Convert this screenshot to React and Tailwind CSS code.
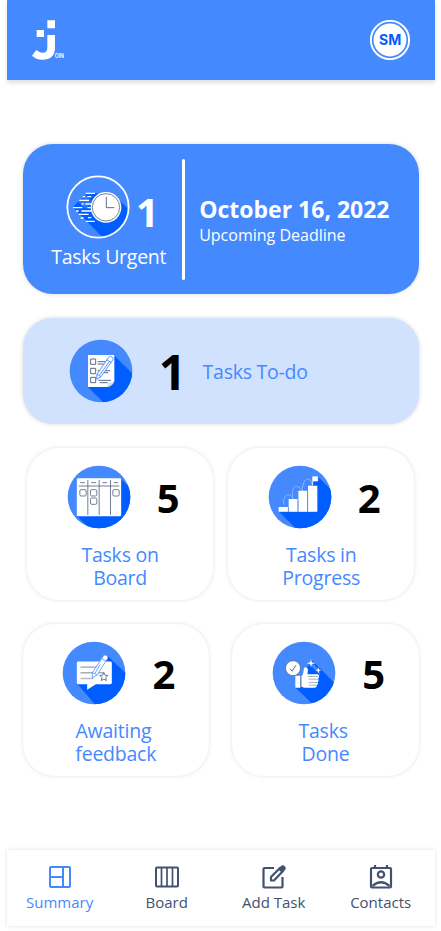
const FONT = "font-['Open_Sans','Noto_Sans',sans-serif]";

function Disc({ id, cx, cy, ring, children }) {
  return (
    <svg className="size-16 shrink-0" viewBox={`${cx - 96} ${cy - 96} 192 192`}>
      <defs>
        <clipPath id={id}>
          <circle cx={cx} cy={cy} r="94" />
        </clipPath>
      </defs>
      <circle cx={cx} cy={cy} r="94" fill="#4589ff" />
      <g clipPath={`url(#${id})`}>{children}</g>
      {ring && <circle cx={cx} cy={cy} r="92" fill="none" stroke="#fff" strokeWidth="5.5" />}
    </svg>
  );
}

function UrgentIcon() {
  return (
    <Disc id="urgent" cx={234} cy={203} ring>
      <path d="M288 172L340 224V310H264L158 204L200 162H230Z" fill="#005dff" />
      <path d="M170 183L192 160L214 186L196 210Z" fill="#4589ff" opacity="0.6" />
      <path
        d="M197 162H225M188 172H196M202 172H214M178 183H207M185 194H191M196 194H222M159 205H187M202 205H212M168 215H176M184 215H214M176 225H206M182 236H191M204 235H214M197 246H224"
        stroke="#fff" strokeWidth="4" fill="none"
      />
      <circle cx="258" cy="204" r="46" fill="#fff" />
      <circle cx="258" cy="204" r="41" fill="#fff" stroke="#5c6a84" strokeWidth="2.5" />
      <path d="M259 172V205H283" stroke="#42526e" strokeWidth="2.5" fill="none" />
    </Disc>
  );
}

function TodoIcon() {
  return (
    <Disc id="todo" cx={242} cy={183}>
      <path d="M281 136L350 205V290H262L203 231Z" fill="#005dff" />
      <path d="M203 135H282V213L262 231H203Z" fill="#fff" />
      <path d="M282 213C276 218 269 218 262 217C268 222 262 227 258 231H262C272 230 282 220 282 213Z" fill="#d9dce2" />
      <g fill="none" stroke="#5c6a84" strokeWidth="3">
        <path d="M211 147H226V163H211ZM211 175H226V191H211ZM211 202H226V218H211Z" />
        <path d="M232 155H258M232 162H250M232 182H270M250 188H264M234 211H272M238 218H262" />
      </g>
      <path
        d="M264 143C268 136 281 141 278 149L242 200L229 208L230 193ZM259 149L273 158M230 193L242 200M266 156L238 195"
        fill="#fff" stroke="#4589ff" strokeWidth="2.8" strokeLinejoin="round"
      />
    </Disc>
  );
}

function BoardIcon() {
  return (
    <Disc id="board" cx={235.5} cy={172}>
      <path d="M301 117L340 156V280H222L169 229Z" fill="#005dff" />
      <rect x="169" y="116" width="133" height="114" rx="4" fill="#fff" />
      <g fill="none" stroke="#5c6a84" strokeWidth="2.6">
        <path d="M202 121V226M236 121V226M270 121V226M175 139H296M179 129H193M212 129H227M246 129H260M280 129H293" />
        <rect x="178" y="150" width="19" height="19" rx="4" />
        <rect x="210" y="150" width="19" height="19" rx="4" />
        <rect x="210" y="175" width="19" height="19" rx="4" />
        <rect x="277" y="150" width="19" height="19" rx="4" />
      </g>
    </Disc>
  );
}

function ProgressIcon() {
  return (
    <Disc id="progress" cx={239} cy={172}>
      <path d="M293 111L350 168V290H250L175 215L274 124Z" fill="#005dff" />
      <path d="M176 200L192 196L208 166L220 172L232 140L247 152L262 118L276 128V216H176Z" fill="#4589ff" />
      <path
        d="M191 196C186 182 196 160 208 166C213 168 217 172 218 177C214 157 218 139 228 140C238 141 244 149 246 154C246 133 253 118 263 118C272 119 275 128 276 136"
        fill="none" stroke="#8fb8ff" strokeWidth="2.8"
      />
      <path d="M175 202H203V216H175ZM205 178H232V216H205ZM234 153H261V216H234ZM263 138H291V216H263Z" fill="#fff" />
      <path d="M204 203V215M233 179V215M262 154V215" stroke="#7180a0" strokeWidth="2" />
      <path d="M277 138V111H292V124H279" fill="#fff" stroke="#fff" strokeWidth="2" />
    </Disc>
  );
}

function FeedbackIcon() {
  return (
    <Disc id="feedback" cx={237.5} cy={175.5}>
      <path d="M280 126L350 193V290H258L187 208Z" fill="#005dff" />
      <path d="M190 141H287Q291 141 291 145V205Q291 209 287 209H243L217 226V209H190Q186 209 186 205V145Q186 141 190 141Z" fill="#fff" />
      <path d="M197 158H250M197 192H236" stroke="#b6bdca" strokeWidth="5" />
      <path d="M197 175H266" stroke="#5c6a84" strokeWidth="2.5" />
      <path
        d="M266 124Q269 120 275 123Q281 127 279 131L247 181L232 190L233 174ZM261 132L274 140M233 174L247 181M256 150L240 177"
        fill="#fff" stroke="#5b97ff" strokeWidth="2.6" strokeLinejoin="round"
      />
      <path d="M267 174L270.5 182L279 183L273 189L274.500 198L267 194L259.500 198L261 189L255 183L263.500 182Z" fill="#fff" stroke="#42526e" strokeWidth="2.4" />
    </Disc>
  );
}

function DoneIcon() {
  return (
    <Disc id="done" cx={253} cy={175.5}>
      <path d="M275 136L360 221V290H301L227 219L258 160L262 142Z" fill="#005dff" />
      <path d="M258 158L240 140L268 134L300 168V190H262Z" fill="#4589ff" />
      <path d="M262 158L270 150L300 180V192H264Z" fill="#005dff" />
      <path d="M227 184H242V220H227Z" fill="#fff" />
      <path
        d="M245 185C252 178 251 170 253 161C256 155 265 159 265 167L263 179H294Q299 180 298 185Q299 190 295 192Q299 200 294 203Q297 209 291 212Q292 219 286 220H253L245 216Z"
        fill="#fff"
      />
      <path d="M265 186H296M267 194H295M267 204H293M267 212H290" stroke="#7d8aa3" strokeWidth="2" />
      <path d="M243 185V219" stroke="#7d8aa3" strokeWidth="2" />
      <circle cx="220" cy="161" r="22.500" fill="#fff" stroke="#53627f" strokeWidth="2.200" />
      <path d="M211 163L217 170L229 152" fill="none" stroke="#42526e" strokeWidth="2.600" />
      <path d="M274 133L276.500 143.500L287 146L276.500 148.500L274 159L271.500 148.500L261 146L271.500 143.500ZM296 158L298 165L305 167L298 169L296 176L294 169L287 167L294 165Z" fill="#fff" />
    </Disc>
  );
}

function Logo() {
  return (
    <svg className="h-[42px] w-9" viewBox="90 57 108 126">
      <path d="M142 61H165V85H142ZM110 90H132V111H110Z" fill="#fff" />
      <path d="M142 105H165V143C165 168 149 179 128 179C113 179 103 174 96 167L109 150C115 155 121 158 128 158C138 158 142 153 142 143Z" fill="#fff" />
      <text x="164" y="175" fontFamily="Inter, sans-serif" fontWeight="600" fontSize="17" textLength="28" lengthAdjust="spacingAndGlyphs" fill="#fff">OIN</text>
    </svg>
  );
}

function StatCard({ icon, value, label }) {
  return (
    <section className="h-[152px] w-[186.300px] rounded-[32px] bg-white pt-[17.300px] shadow-[0_0_4px_rgba(0,0,0,0.12)]">
      <div className="flex h-16 items-center pl-[39.800px]">
        {icon}
        <span className="ml-[26px] mt-[2px] text-[40px] leading-none font-bold text-black">{value}</span>
      </div>
      <p className="mt-[13.700px] text-center text-[19.500px] leading-[23px] tracking-[-0.23px] whitespace-pre text-[#4589ff]">{label}</p>
    </section>
  );
}

function NavItem({ label, active, children }) {
  return (
    <a className={`flex w-[107px] flex-col items-center pt-[15px] ${active ? "text-[#4589ff]" : "text-[#42526e]"}`}>
      <svg className="size-6" viewBox="0 0 24 24" fill="none" stroke="currentColor" strokeWidth="2">
        {children}
      </svg>
      <span className="mt-[3px] -ml-px text-[15px] leading-5 whitespace-nowrap">{label}</span>
    </a>
  );
}

export default function App() {
  return (
    <div className={`h-[931px] w-[441px] overflow-hidden bg-white pl-[6.670px] ${FONT}`}>
      <div className="flex h-[926px] w-[428px] flex-col">
        <header className="flex h-20 shrink-0 items-center justify-between bg-[#4589ff] pr-[25px] pl-[23.500px] shadow-[0_3px_4px_rgba(0,0,0,0.12)]">
          <Logo />
          <svg className="size-10" viewBox="0 0 40 40">
            <circle cx="20" cy="20" r="19.100" fill="none" stroke="#fff" strokeWidth="1.900" />
            <circle cx="20" cy="20" r="16.400" fill="#fff" />
            <text x="9" y="25" fontFamily="Inter, sans-serif" fontWeight="700" fontSize="14" textLength="22.200" lengthAdjust="spacingAndGlyphs" fill="#005dff">SM</text>
          </svg>
        </header>

        <main className="flex grow flex-col px-4 pt-16">
          <section className="flex h-[150px] shrink-0 items-center rounded-[30px] bg-[#4589ff] text-white shadow-[0_0_4px_rgba(0,0,0,0.16)]">
            <div className="flex w-[159px] flex-col items-start pt-[8px]">
              <div className="flex h-16 items-center pl-[43.300px]">
                <UrgentIcon />
                <span className="ml-[6px] mt-[9px] text-[40px] leading-none font-bold">1</span>
              </div>
              <span className="mt-[4px] ml-[28.500px] text-[19.500px] leading-7 tracking-[-0.25px] whitespace-nowrap">Tasks Urgent</span>
            </div>
            <div className="h-[121px] w-[3px] rounded-full bg-white" />
            <div className="ml-[14.500px] flex flex-col pt-[4px] whitespace-nowrap">
              <span className="text-[23px] leading-7 font-bold">October 16, 2022</span>
              <span className="pt-px text-[16px] leading-[23px]">Upcoming Deadline</span>
            </div>
          </section>

          <section className="mt-6 flex h-[106px] shrink-0 items-center rounded-[30px] bg-[#d1e2ff] pl-[46px] shadow-[0_0_4px_rgba(0,0,0,0.16)]">
            <TodoIcon />
            <span className="ml-[26px] mt-[2px] text-[48px] leading-none font-bold text-black">1</span>
            <span className="ml-[16.500px] pt-px text-[19.500px] tracking-[-0.25px] whitespace-nowrap text-[#4589ff]">Tasks To-do</span>
          </section>

          <div className="mt-6 flex justify-between px-[4.300px]">
            <StatCard icon={<BoardIcon />} value="5" label={"Tasks on\nBoard"} />
            <StatCard icon={<ProgressIcon />} value="2" label={"Tasks in\nProgress"} />
          </div>
          <div className="mt-6 flex justify-between">
            <StatCard icon={<FeedbackIcon />} value="2" label={"Awaiting \nfeedback"} />
            <StatCard icon={<DoneIcon />} value="5" label={"Tasks \nDone"} />
          </div>
        </main>

        <nav className="flex h-[76px] shrink-0 bg-white shadow-[0_0_4px_rgba(0,0,0,0.12)]">
          <NavItem label="Summary" active>
            <rect x="2" y="2" width="20" height="20" rx="1" />
            <path d="M15 2V22M2 12H15" />
          </NavItem>
          <NavItem label="Board">
            <rect x="1" y="2.500" width="22" height="19" rx="1" />
            <path d="M6.500 3V21M12 3V21M17.500 3V21" strokeWidth="1.700" />
          </NavItem>
          <NavItem label="Add Task">
            <path d="M12 3H2.500Q1.500 3 1.500 4V21.500Q1.500 22.500 2.500 22.500H19.500Q20.500 22.500 20.500 21.500V12" strokeWidth="2.200" />
            <path d="M9 15.500V12L18 3L21 6L12 15.500Z" strokeWidth="2.200" strokeLinejoin="round" />
            <path d="M16 4L19 1Q21 -0.500 23 1.500Q24.500 3.500 23 5L20 8Z" fill="currentColor" stroke="none" />
          </NavItem>
          <NavItem label="Contacts">
            <rect x="2" y="3" width="20" height="19.500" rx="1" strokeWidth="2.200" />
            <path d="M6 0V3M18 0V3" strokeWidth="2.200" />
            <circle cx="12" cy="9.500" r="3.200" strokeWidth="2.200" />
            <path d="M3.500 21Q12 13.500 20.500 21" strokeWidth="2.200" />
          </NavItem>
        </nav>
      </div>
    </div>
  );
}
